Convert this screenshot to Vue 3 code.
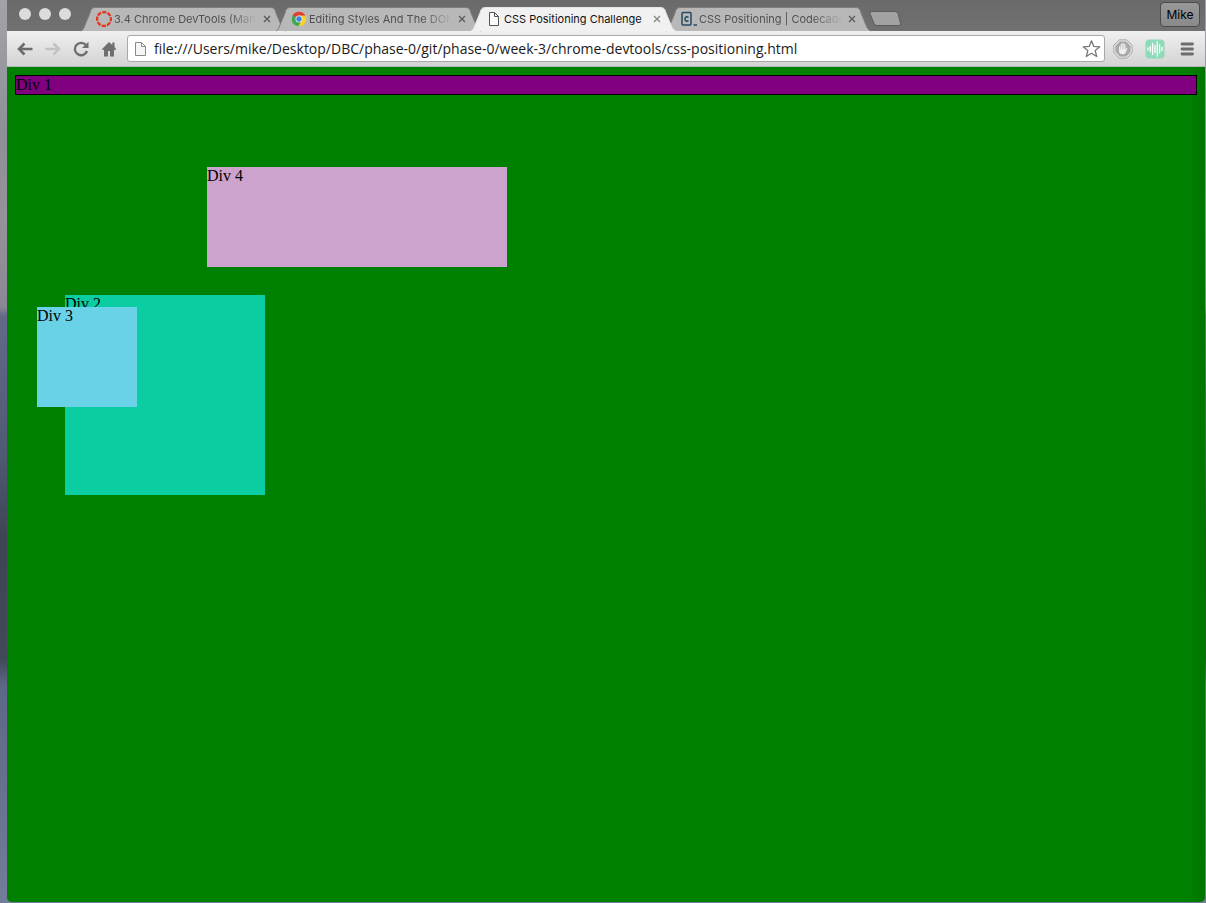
<script setup>
import { ref } from 'vue'

const tabs = [
  { icon: 'canvas', title: '3.4 Chrome DevTools (Man' },
  { icon: 'chrome', title: 'Editing Styles And The DOM' },
  { icon: 'file', title: 'CSS Positioning Challenge', active: true },
  { icon: 'code', title: 'CSS Positioning | Codecade' }
]
const url = ref('file:///Users/mike/Desktop/DBC/phase-0/git/phase-0/week-3/chrome-devtools/css-positioning.html')
</script>

<template>
  <div class="desktop">
    <div class="window">
      <header class="strip">
        <div class="lights">
          <button aria-label="Close window"></button>
          <button aria-label="Minimize window"></button>
          <button aria-label="Zoom window"></button>
        </div>
        <nav class="tabs" aria-label="Tabs">
          <div v-for="t in tabs" :key="t.title" class="tab" :class="{ active: t.active }">
            <svg class="shape" viewBox="0 0 206 24" preserveAspectRatio="none" aria-hidden="true">
              <path class="fill" d="M-2 24C0 23 1 21 2 18L7 6C8 2 9 .5 13 .5H187C191 .5 192 2 193 6L198 18C199 21 200 23 203 24Z" />
              <path class="edge" d="M-2 24C0 23 1 21 2 18L7 6C8 2 9 .5 13 .5H187C191 .5 192 2 193 6L198 18C199 21 200 23 203 24" />
            </svg>
            <button class="pick">
              <svg v-if="t.icon === 'canvas'" width="16" height="16" viewBox="0 0 16 16" aria-hidden="true">
                <circle cx="8" cy="8" r="6.9" fill="none" stroke="#e5331f" stroke-width="2.300" stroke-dasharray="4.200 1.220" stroke-dashoffset="2" />
              </svg>
              <svg v-else-if="t.icon === 'chrome'" width="16" height="16" viewBox="0 0 16 16" aria-hidden="true">
                <path d="M8 8 1.6 4.5A7.2 7.2 0 0 1 14.4 4.8H8Z" fill="#e2402f" />
                <path d="M8 8 1.7 4.4A7.2 7.2 0 0 0 7.4 15.2L10.8 9.6Z" fill="#3fa74c" />
                <path d="M8 4.8h6.4A7.2 7.2 0 0 1 7.4 15.2L10.8 9.6Z" fill="#fbcf24" />
                <circle cx="8" cy="8" r="3.5" fill="#f4f4f4" />
                <circle cx="8" cy="8" r="2.7" fill="#3f83e8" />
              </svg>
              <svg v-else-if="t.icon === 'file'" width="16" height="16" viewBox="0 0 16 16" aria-hidden="true">
                <path d="M3.500 1.500h5l4 4v9h-9zM8.500 1.500v4h4" fill="#fafafa" stroke="#555" />
              </svg>
              <svg v-else width="16" height="16" viewBox="0 0 16 16" aria-hidden="true">
                <rect x="1" y="1.500" width="9" height="12.500" rx="1" fill="none" stroke="#264a63" stroke-width="1.500" />
                <path d="M7.500 6.300C5.800 5.300 4 5.800 4 8S5.800 10.700 7.500 9.700M12.500 14h3.500" fill="none" stroke="#264a63" stroke-width="1.500" />
              </svg>
              <span>{{ t.title }}</span>
            </button>
            <button class="close" aria-label="Close tab">
              <svg width="8" height="8" viewBox="0 0 8 8"><path d="M1 1l6 6M7 1 1 7" /></svg>
            </button>
          </div>
        </nav>
        <button class="new" aria-label="New tab">
          <svg width="32" height="16" viewBox="0 0 32 16">
            <path d="M3 .500h23q2 0 3 2l2.500 10q.5 2-1.500 2H8q-2 0-3-2L1 2.500q-.5-2 2-2z" fill="#a2a2a2" stroke="#5c5c5c" />
          </svg>
        </button>
        <button class="user">Mike</button>
      </header>

      <div class="toolbar">
        <button class="tool" aria-label="Back">
          <svg width="16" height="16" viewBox="0 0 16 16"><path d="M15.500 8H2.500M7.500 2.500 2 8l5.500 5.500" fill="none" stroke="#6b6b6b" stroke-width="2.500" /></svg>
        </button>
        <button class="tool" aria-label="Forward">
          <svg width="16" height="16" viewBox="0 0 16 16"><path d="M.5 8h13M8.500 2.500 14 8l-5.500 5.500" fill="none" stroke="#c2c2c2" stroke-width="2.500" /></svg>
        </button>
        <button class="tool" aria-label="Reload">
          <svg width="16" height="16" viewBox="0 0 16 16"><path d="M13 4.200A6.200 6.200 0 1 0 14 10" fill="none" stroke="#6f6f6f" stroke-width="2.400" /><path d="M15.500.8V7H9z" fill="#6f6f6f" /></svg>
        </button>
        <button class="tool" aria-label="Home">
          <svg width="16" height="16" viewBox="0 0 16 16"><path d="M8 1 .8 8.200l1.200 1L3 8.400V15.500h4V10h2v5.500h4V8.400l1 .8 1.200-1L13.500 6V1.500h-2.200v2.400z" fill="#6f6f6f" /></svg>
        </button>
        <form class="omnibox" @submit.prevent>
          <svg width="13" height="16" viewBox="0 0 13 16" aria-hidden="true"><path d="M1.500 1.500h6l4 4v9h-10zM7.500 1.500v4h4" fill="#f5f5f5" stroke="#8a8a8a" /></svg>
          <input v-model="url" type="text" aria-label="Address" spellcheck="false" />
          <button type="button" aria-label="Bookmark this page">
            <svg width="20" height="20" viewBox="0 0 20 20"><path d="m9.500 1.800 2.300 5.600 6 .4-4.600 3.800 1.500 5.900-5.200-3.200-5.200 3.200 1.500-5.900L1.200 7.800l6-.4z" fill="#fff" stroke="#777" stroke-width="1.300" stroke-linejoin="round" /></svg>
          </button>
        </form>
        <div class="extensions">
          <button aria-label="Ad blocker">
            <svg width="20" height="20" viewBox="0 0 20 20">
              <path d="M6.200.8h7.600l5.400 5.400v7.600l-5.400 5.400H6.200L.8 13.800V6.200z" fill="#dedede" stroke="#adadad" />
              <path d="M6.900 2.500h6.200l4.400 4.400v6.200l-4.400 4.400H6.900l-4.400-4.400V6.900z" fill="#a8a8a8" />
              <path d="M6.600 8v3.500M8.300 5.500v6M10 4.500v7M11.700 5.500v6" stroke="#efefef" stroke-width="1.300" stroke-linecap="round" />
              <path d="M6 10.500h6.200l1.500-1.700q1-.5.700.6l-1.700 4q-.9 1.900-2.900 1.900-3.800 0-3.800-3.600z" fill="#efefef" />
            </svg>
          </button>
          <button aria-label="Sound">
            <svg width="20" height="20" viewBox="0 0 20 20">
              <rect x=".5" y=".5" width="19" height="19" rx="4" fill="#8edbb7" />
              <path d="M3 9v2M5.300 7.500v5M7.600 4.500v11M10 6.500v7M12.300 3v14M14.600 6v8M17 8.500v3" stroke="#fff" stroke-width="1.300" stroke-linecap="round" />
            </svg>
          </button>
          <button aria-label="Menu">
            <svg width="20" height="20" viewBox="0 0 20 20"><path d="M5 5h10.500M5 10h10.500M5 15h10.500" stroke="#6c6c6c" stroke-width="2.800" stroke-linecap="round" /></svg>
          </button>
        </div>
      </div>

      <main class="page">
        <div class="one">Div 1</div>
        <div class="two">Div 2</div>
        <div class="three">Div 3</div>
        <div class="four">Div 4</div>
      </main>
    </div>
  </div>
</template>

<style>
body { margin: 0; }
</style>

<style scoped>
* { box-sizing: border-box; }
button { border: 0; padding: 0; margin: 0; background: none; font: inherit; color: inherit; }
svg { display: block; flex: none; }
.desktop {
  min-height: 100vh;
  display: flex;
  padding: 0 1px 1px 7px;
  background: linear-gradient(#a2a2aa 0, #8f8f96 15%, #97929a 24%, #8c8794 34%, #64698a 35%, #505a74 50%, #3e4454 60%, #424a5a 73%, #5d6787 76%, #737c98 100%);
  font-family: Inter, "Liberation Sans", sans-serif;
}
.window {
  flex: 1;
  min-width: 0;
  display: flex;
  flex-direction: column;
  border-radius: 0 0 5px 5px;
  overflow: hidden;
  background: green;
}
.strip {
  display: flex;
  align-items: flex-start;
  height: 31px;
  background: linear-gradient(#6a6a6a, #717171);
}
.lights { display: flex; gap: 8px; padding: 8px 12px 0; }
.lights button { width: 12px; height: 12px; border-radius: 50%; background: #dcdcdc; }
.tabs { display: flex; padding: 7px 0 0; }
.tab {
  position: relative;
  display: flex;
  align-items: center;
  width: 206px;
  height: 24px;
  margin-right: -11px;
  padding: 0 14px 0 13px;
  color: #505050;
  font-size: 11px;
}
.tab.active { z-index: 1; color: #111; }
.shape { position: absolute; inset: 0; width: 100%; height: 100%; overflow: visible; }
.fill { fill: #b8b8b8; }
.edge { fill: none; stroke: #7d7d7d; }
.active .fill { fill: #f1f1f1; }
.active .edge { stroke: #e6e6e6; }
.pick { position: relative; flex: 1; min-width: 0; display: flex; align-items: center; gap: 2px; }
.pick span {
  flex: 1;
  text-align: left;
  white-space: nowrap;
  overflow: hidden;
  mask-image: linear-gradient(90deg, #000 80%, transparent);
}
.active .pick span { mask-image: none; }
.close { position: relative; margin: 0 4px 0 6px; }
.close path { stroke: #5c5c5c; stroke-width: 1.400; }
.active .close path { stroke: #888; }
.new { margin: 11px 0 0 6px; }
.user {
  margin: 2px 5px 0 auto;
  width: 40px;
  height: 25px;
  border: 1px solid #4c4c4c;
  border-radius: 4px;
  background: linear-gradient(#989898, #8a8a8a);
  font-size: 12px;
  color: #000;
}
.toolbar {
  display: flex;
  align-items: center;
  height: 36px;
  padding: 0 8px 0 10px;
  border-bottom: 1px solid #b9b9b9;
  background: linear-gradient(#f0f0f0, #d3d3d3);
}
.tool { margin-right: 12px; }
.omnibox {
  flex: 1;
  min-width: 0;
  display: flex;
  align-items: center;
  height: 27px;
  margin-right: 8px;
  margin-left: -2px;
  padding: 0 2px 0 6px;
  border: 1px solid #a8a8a8;
  border-radius: 3px;
  background: #fff;
}
.omnibox input {
  flex: 1;
  min-width: 0;
  padding: 0 7px;
  border: 0;
  outline: 0;
  background: none;
  font: 14px "Open Sans", "Liberation Sans", sans-serif;
  color: #1a1a1a;
}
.extensions { display: flex; gap: 12px; }
.page {
  position: relative;
  flex: 1;
  padding: 8px;
  background: linear-gradient(270deg, #007500, green 16px);
  font: 16px/18px "Liberation Serif", serif;
  color: #000;
}
.one { height: 20px; border: 1px solid #000; background: purple; }
.two, .three, .four { position: absolute; }
.two { left: 58px; top: 228px; width: 200px; height: 200px; background: #0bcda2; }
.three { left: 30px; top: 240px; width: 100px; height: 100px; background: #69d2e7; }
.four { left: 200px; top: 100px; width: 300px; height: 100px; background: #cca3cd; }
</style>
